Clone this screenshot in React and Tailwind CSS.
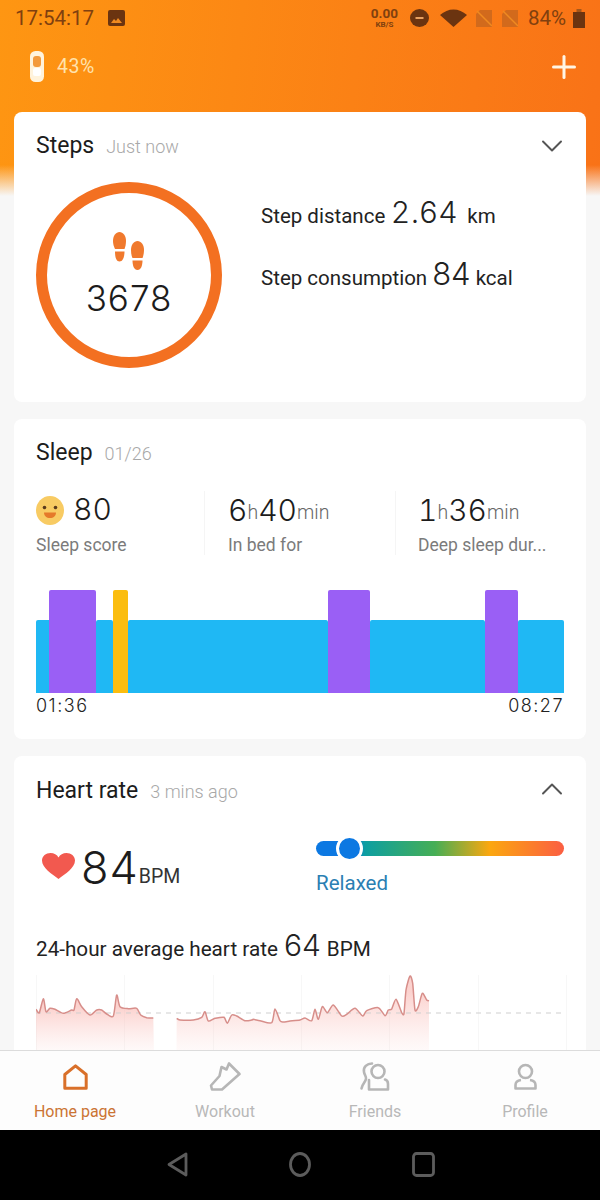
import React from 'react';
import { ChevronDown, ChevronUp, Plus } from 'lucide-react';

// Catmull-Rom through the read-off points, so spikes keep their height
const toPath = (points, ox, oy) => {
  const pts = points.map(([x, y]) => [x / 3 + ox, y / 3 + oy]);
  let d = `${pts[0][0].toFixed(1)} ${pts[0][1].toFixed(1)}`;
  for (let i = 0; i < pts.length - 1; i++) {
    const p0 = pts[i - 1] || pts[i];
    const p1 = pts[i];
    const p2 = pts[i + 1];
    const p3 = pts[i + 2] || p2;
    const c1x = p1[0] + (p2[0] - p0[0]) / 8;
    const c1y = p1[1] + (p2[1] - p0[1]) / 8;
    const c2x = p2[0] - (p3[0] - p1[0]) / 8;
    const c2y = p2[1] - (p3[1] - p1[1]) / 8;
    d += ` C${c1x.toFixed(1)} ${c1y.toFixed(1)} ${c2x.toFixed(1)} ${c2y.toFixed(1)} ${p2[0].toFixed(1)} ${p2[1].toFixed(1)}`;
  }
  return d;
};

// Heart rate trace, read off the chart (svg origin is the chart's top left)
const traceA = toPath(
  [[48, 148], [58, 158], [70, 116], [78, 155], [90, 145], [105, 148], [130, 160], [155, 150], [162, 150], [170, 116], [185, 140], [210, 165], [230, 150], [245, 150], [260, 162], [280, 168], [290, 105], [300, 140], [325, 146], [350, 145], [362, 165], [380, 173], [400, 174]],
  -16, -15
);
const traceB = toPath(
  [[470, 175], [480, 180], [520, 180], [545, 172], [555, 155], [565, 183], [585, 175], [612, 172], [622, 190], [635, 165], [650, 168], [675, 182], [695, 180], [700, 178], [720, 182], [755, 188], [765, 147], [780, 182], [790, 186], [810, 183], [840, 180], [855, 174], [875, 182], [885, 148], [895, 178], [907, 140], [922, 158], [940, 135], [965, 168], [980, 163], [1005, 145], [1028, 168], [1040, 152], [1075, 143], [1095, 167], [1105, 150], [1115, 147], [1128, 118], [1145, 158], [1152, 160], [1158, 90], [1170, 48], [1178, 70], [1185, 150], [1195, 140], [1207, 100], [1220, 120], [1227, 122]],
  -16, -15
);

const StatusBar = () => (
  <div className="flex h-9 items-center justify-between pl-[15px] pr-[15px] text-[#80400f]">
    <div className="flex items-center gap-[14px]">
      <span className="text-[20.5px] leading-none">17:54:17</span>
      <svg width="17" height="16" viewBox="0 0 17 16">
        <rect width="17" height="16" rx="2" fill="#6b3410" />
        <path d="M3 13l3-4 2 2 2-3 4 5z" fill="#f08a20" />
      </svg>
    </div>
    <div className="flex items-center">
      <div className="flex w-[27px] flex-col items-center font-bold leading-none">
        <span className="text-[13.5px] leading-[12px]">0.00</span>
        <span className="mt-[2px] text-[8px] leading-[8px]">KB/S</span>
      </div>
      <svg className="ml-[12px]" width="19" height="18" viewBox="0 0 19 18">
        <ellipse cx="9.5" cy="9" rx="9.5" ry="9" fill="#6b3410" />
        <rect x="5.5" y="8" width="8" height="2" fill="#e8a060" />
      </svg>
      <svg className="ml-[11px]" width="27" height="18" viewBox="0 0 27 18">
        <path d="M0 6C8 -1.500 19 -1.500 27 6L13.500 18z" fill="#6b3410" />
      </svg>
      <svg className="ml-[9px]" width="16" height="17" viewBox="0 0 16 17">
        <path d="M4 0h12v17H0V4z" fill="#d26a1c" />
        <path d="M1 1l15 15" stroke="#f08a20" strokeWidth="1.500" />
      </svg>
      <svg className="ml-[10px]" width="16" height="17" viewBox="0 0 16 17">
        <path d="M4 0h12v17H0V4z" fill="#d26a1c" />
        <path d="M1 1l15 15" stroke="#f08a20" strokeWidth="1.500" />
      </svg>
      <span className="ml-[10px] text-[20.5px] leading-none">84%</span>
      <svg className="ml-[7px]" width="12" height="19" viewBox="0 0 12 19">
        <rect x="3.500" y="0" width="5" height="3" fill="#a5571a" />
        <rect x="0" y="3" width="12" height="16" fill="#6b3410" />
      </svg>
    </div>
  </div>
);

const StepsIcon = () => (
  <svg width="32" height="38" viewBox="0 0 32 38" fill="#f0792d">
    <path d="M6.500 0C10 0 13 3.500 13 9c0 3-.7 6-1.500 8h-9.500C1 15 0 12 0 9 0 3.500 3 0 6.500 0z" />
    <path d="M2 19.500h9.500c0 5-1.500 10-5 10s-4.500-5-4.500-10z" />
    <path d="M24.500 9C28 9 31 12.500 31 18c0 3-.7 6-1.500 8h-10C18.500 24 18 21 18 18 18 12.500 21 9 24.500 9z" />
    <path d="M19.500 28.500h10c0 5-1.500 9.500-5 9.500s-5-4.500-5-9.500z" />
  </svg>
);

const Face = () => (
  <svg width="28" height="29" viewBox="0 0 28 29">
    <ellipse cx="14" cy="14.500" rx="14" ry="14.500" fill="#f8cb63" />
    <circle cx="8.500" cy="11.500" r="1.800" fill="#5a3a1c" />
    <circle cx="19.500" cy="11.500" r="1.800" fill="#5a3a1c" />
    <path d="M8 16.500h12c0 3.500-2.500 5.500-6 5.500s-6-2-6-5.500z" fill="#e5792a" />
  </svg>
);

const SleepStat = ({ children, label, className }) => (
  <div className={className}>
    <div className="flex h-[38px] items-center">{children}</div>
    <div className="mt-[6px] text-[17.5px] leading-5 text-[#7b7b7b]">{label}</div>
  </div>
);

const Big = ({ children }) => <span className="font-['Inter'] text-[30px] font-light tabular-nums leading-none text-[#1c1c1c]">{children}</span>;
const Unit = ({ children }) => <span className="mt-[5px] text-[19.5px] font-light leading-none text-[#666]">{children}</span>;

const sleepSegments = [
  'w-[13px] h-[73px] bg-[#1fb8f4] rounded-tl-[2px]',
  'w-[47px] h-[103px] bg-[#9a5ff5] rounded-t-[2px]',
  'w-[17px] h-[73px] bg-[#1fb8f4] rounded-t-[2px]',
  'w-[15px] h-[103px] bg-[#fbbd0f] rounded-t-[2px]',
  'w-[200px] h-[73px] bg-[#1fb8f4] rounded-t-[2px]',
  'w-[42px] h-[103px] bg-[#9a5ff5] rounded-t-[2px]',
  'w-[115px] h-[73px] bg-[#1fb8f4] rounded-t-[2px]',
  'w-[33px] h-[103px] bg-[#9a5ff5] rounded-t-[2px]',
  'w-[46px] h-[73px] bg-[#1fb8f4] rounded-t-[2px]',
];

const HeartChart = () => (
  <svg className="mt-[5px] block" width="532" height="80" viewBox="0 0 532 80" fill="none">
    <defs>
      <linearGradient id="hrFill" x1="0" y1="0" x2="0" y2="1">
        <stop offset="0.2" stopColor="#f9b4ae" stopOpacity="0.6" />
        <stop offset="1" stopColor="#fbd5d2" stopOpacity="0.08" />
      </linearGradient>
    </defs>
    {[0, 88, 177, 265, 353, 442, 530].map((x) => (
      <line key={x} x1={x + 0.5} y1="0" x2={x + 0.5} y2="80" stroke="#f7f7f7" />
    ))}
    <path d={`M${traceA} L118 80 L0 80 Z`} fill="url(#hrFill)" />
    <path d={`M${traceB} L393 80 L140.500 80 Z`} fill="url(#hrFill)" />
    <line x1="0" y1="38" x2="530" y2="38" stroke="#cfcfcf" strokeWidth="1" strokeDasharray="5 5" />
    <path d={`M${traceA}`} stroke="#d78e8a" strokeWidth="1.500" strokeLinejoin="round" />
    <path d={`M${traceB}`} stroke="#d78e8a" strokeWidth="1.500" strokeLinejoin="round" />
  </svg>
);

const HomeIcon = () => (
  <svg width="25" height="26" viewBox="0 0 25 26" fill="none" stroke="#d9702a" strokeWidth="3" strokeLinejoin="round">
    <path d="M12.500 1.800L23.200 10.500v13.700H1.800V10.500z" />
  </svg>
);
const ShoeIcon = () => (
  <svg width="32" height="29" viewBox="0 0 32 29" fill="none" stroke="#b6b6b6" strokeWidth="2.600" strokeLinejoin="round" strokeLinecap="round">
    <path d="M3 27.500h10L30.500 12 20 1.500 17.500 7.500 12.500 5 10.500 14 2 23.500z" />
  </svg>
);
const FriendsIcon = () => (
  <svg width="30" height="29" viewBox="0 0 30 29" fill="none" stroke="#b6b6b6" strokeWidth="2.600" strokeLinejoin="round" strokeLinecap="round">
    <circle cx="18" cy="9.500" r="6.500" />
    <path d="M9 18v9.500h19V22c0-2-1-4-3-4.500" />
    <path d="M12 1.500C7 1.500 3 5 4 10c.5 3 2.500 4.500 2 7-.5 3-4 5-4.500 9.500" />
  </svg>
);
const ProfileIcon = () => (
  <svg width="23" height="27" viewBox="0 0 23 27" fill="none" stroke="#b6b6b6" strokeWidth="2.600" strokeLinejoin="round">
    <circle cx="11.500" cy="8.500" r="6.500" />
    <path d="M7 17c-3.500.5-5.500 2.500-5.500 5v3.500h20V22c0-2.500-2-4.500-5.500-5" />
  </svg>
);

const tabs = [
  { label: 'Home page', icon: <HomeIcon />, color: 'text-[#cb7434]' },
  { label: 'Workout', icon: <ShoeIcon />, color: 'text-[#b8b8b8]' },
  { label: 'Friends', icon: <FriendsIcon />, color: 'text-[#b8b8b8]' },
  { label: 'Profile', icon: <ProfileIcon />, color: 'text-[#b8b8b8]' },
];

const App = () => {
  return (
    <div className="flex h-[1200px] w-[600px] flex-col overflow-hidden bg-[#f7f7f7] font-['Roboto',sans-serif]">
      <main className="min-h-0 flex-1 overflow-hidden bg-[linear-gradient(to_bottom,transparent_165px,#f7f7f7_196px),linear-gradient(97deg,#fe9612,#f86c18)]">
        <StatusBar />

        <div className="flex h-[76px] items-center justify-between pb-[15px] pl-[30px] pr-[18px]">
          <div className="flex items-center gap-[13px]">
            <svg width="14" height="31" viewBox="0 0 14 31">
              <rect width="14" height="31" rx="5.500" fill="#fff3dc" />
              <rect x="3" y="5" width="8" height="11" rx="3" fill="#f39a3c" />
              <rect x="3" y="17" width="8" height="8" rx="2" fill="#fff" />
            </svg>
            <span className="text-[19.5px] leading-none tracking-[0.5px] text-[#ffe2ad]">43%</span>
          </div>
          <Plus size={36} strokeWidth={2} className="text-[#fff5e4]" />
        </div>

        {/* Steps */}
        <section className="mx-[14px] h-[290px] rounded-lg bg-white px-[22px] pt-[19px]">
          <div className="flex items-center justify-between">
            <div className="flex items-baseline gap-[12px]">
              <h2 className="text-[23px] leading-[30px] text-[#1c1c1c]">Steps</h2>
              <span className="text-[18px] font-light text-[#a8a8a8]">Just now</span>
            </div>
            <ChevronDown size={36} strokeWidth={1.300} className="-mr-[6px] -my-[3px] text-[#555]" />
          </div>
          <div className="mt-[21px] flex">
            <div className="flex h-[186px] w-[186px] shrink-0 flex-col items-center rounded-full border-[11px] border-[#f37021] pt-[39px]">
              <StepsIcon />
              <span className="mt-[6px] font-['Inter'] text-[35px] font-light leading-[44px] tracking-[1px] text-[#1c1c1c]">3678</span>
            </div>
            <div className="ml-[39px] pt-[8px] text-[20.5px] text-[#222]">
              <div className="flex h-[40px] items-baseline">
                Step distance
                <span className="mx-[6px] font-['Inter'] text-[30px] font-light tracking-[1px]">2.64</span>
                <span className="ml-[3px]">km</span>
              </div>
              <div className="mt-[21px] flex h-[40px] items-baseline">
                Step consumption
                <span className="mx-[5px] font-['Inter'] text-[31px] font-light">84</span>
                kcal
              </div>
            </div>
          </div>
        </section>

        {/* Sleep */}
        <section className="mx-[14px] mt-[17px] h-[320px] rounded-lg bg-white px-[22px] pt-[19px]">
          <div className="flex items-baseline gap-[12px]">
            <h2 className="text-[23px] leading-[30px] text-[#1c1c1c]">Sleep</h2>
            <span className="text-[18px] font-light text-[#a8a8a8]">01/26</span>
          </div>
          <div className="mt-[23px] flex">
            <SleepStat className="w-[168px]" label="Sleep score">
              <Face />
              <span className="ml-[9px]"><Big>80</Big></span>
            </SleepStat>
            <SleepStat className="w-[191px] border-l border-[#f5f5f5] pl-[23px]" label="In bed for">
              <Big>6</Big><Unit>h</Unit><Big>40</Big><Unit>min</Unit>
            </SleepStat>
            <SleepStat className="flex-1 border-l border-[#f5f5f5] pl-[22px]" label="Deep sleep dur...">
              <Big>1</Big><Unit>h</Unit><Big>36</Big><Unit>min</Unit>
            </SleepStat>
          </div>
          <div className="mt-[35px] flex items-end">
            {sleepSegments.map((cls, i) => (
              <div key={i} className={cls} />
            ))}
          </div>
          <div className="mt-[1px] flex justify-between font-['Inter'] text-[18px] font-light leading-6 tracking-[1.500px] text-[#222]">
            <span>01:36</span>
            <span>08:27</span>
          </div>
        </section>

        {/* Heart rate */}
        <section className="mx-[14px] mt-[17px] h-[400px] rounded-lg bg-white px-[22px] pt-[20px]">
          <div className="flex items-center justify-between">
            <div className="flex items-baseline gap-[12px]">
              <h2 className="text-[23px] leading-[30px] text-[#1c1c1c]">Heart rate</h2>
              <span className="text-[18px] font-light text-[#a8a8a8]">3 mins ago</span>
            </div>
            <ChevronUp size={36} strokeWidth={1.300} className="-mr-[6px] -mt-[5px] -mb-[1px] text-[#555]" />
          </div>
          <div className="mt-[35px] flex h-[64px]">
            <div className="flex w-[280px] items-start pt-[2px]">
              <svg className="ml-[6px] mt-[10px]" width="33" height="26" viewBox="0 0 33 26">
                <path d="M16.500 26C10 21 0 15 0 7.500 0 3 4 0 8.500 0c3.500 0 6.500 1.500 8 4.500 1.500-3 4.500-4.500 8-4.500C29 0 33 3 33 7.500 33 15 23 21 16.500 26z" fill="#f2594f" />
              </svg>
              <span className="ml-[6px] font-['Inter'] text-[45px] font-light leading-[50px] tracking-[1px] text-[#1c1c1c]">84</span>
              <span className="mt-[22px] text-[19.500px] leading-6 text-[#333]">BPM</span>
            </div>
            <div className="flex-1">
              <div className="relative h-[15px] rounded-full bg-[linear-gradient(to_right,#0c78e2_0%,#0c78e2_14%,#0e9fa0_20%,#46ae55_48%,#fba70f_70%,#fb5e42_100%)]">
                <span className="absolute left-[20px] top-[-6px] h-[27px] w-[27px] rounded-full border-[3.500px] border-white bg-[#0c78e2]" />
              </div>
              <div className="mt-[15px] text-[20.500px] leading-6 text-[#2b7fb3]">Relaxed</div>
            </div>
          </div>
          <div className="mt-[18px] flex h-[46px] items-baseline text-[20.700px] text-[#222]">
            24-hour average heart rate
            <span className="mx-[6px] font-['Inter'] text-[30px] font-light">64</span>
            BPM
          </div>
          <div className="pt-[1px]">
            <HeartChart />
          </div>
        </section>
      </main>

      <nav className="grid h-20 shrink-0 grid-cols-4 border-t border-[#dcdcdc] bg-[#fdfdfd]">
        {tabs.map((tab) => (
          <div key={tab.label} className="flex flex-col items-center pt-[11px]">
            <div className="flex h-[29px] items-center">{tab.icon}</div>
            <span className={`mt-[11px] text-[16px] leading-5 ${tab.color}`}>{tab.label}</span>
          </div>
        ))}
      </nav>

      <div className="flex h-[70px] shrink-0 items-center justify-center gap-[101px] bg-black pb-[1px] pl-[1px]">
        <svg width="21" height="25" viewBox="0 0 21 25" fill="none" stroke="#5c5c5c" strokeWidth="2.800" strokeLinejoin="round">
          <path d="M19 2v21L2 12.500z" />
        </svg>
        <svg width="22" height="25" viewBox="0 0 22 25" fill="none" stroke="#5c5c5c" strokeWidth="2.800">
          <ellipse cx="11" cy="12.500" rx="9.500" ry="11" />
        </svg>
        <svg width="23" height="25" viewBox="0 0 23 25" fill="none" stroke="#5c5c5c" strokeWidth="2.800">
          <rect x="1.500" y="1.500" width="20" height="22" rx="3" />
        </svg>
      </div>
    </div>
  );
};

export default App;
